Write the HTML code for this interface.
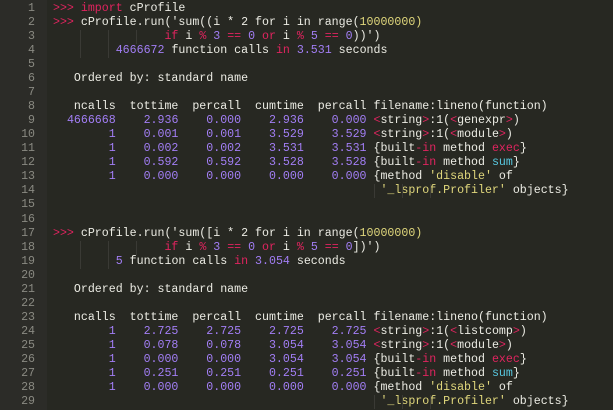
<!DOCTYPE html>
<html><head><meta charset="utf-8"><style>
html,body{margin:0;padding:0;width:613px;height:410px;overflow:hidden;background:#272822;}
#g{position:absolute;left:0;top:0;width:47px;height:410px;background:#2c2c28;}
.l{position:absolute;left:0;height:14px;width:613px;font-family:"Liberation Mono",monospace;font-size:11.62px;line-height:14px;white-space:pre;color:#ecece4;}
.n{position:absolute;left:0;width:35px;text-align:right;color:#8a8a82;}
.c{position:absolute;left:53px;}
.k{color:#e0245f}.p{color:#a27ef5}.s{color:#e0d77c}.b{color:#58c8e0}
.ig{position:absolute;width:1px;background:#3a3a35;height:14px;}
</style></head><body><div id="g"></div>
<div id="x"></div>
<script>
var L=[
'<span class="k">&gt;&gt;&gt; import</span> cProfile',
'<span class="k">&gt;&gt;&gt;</span> cProfile.run(\'sum((i * 2 for i in range(<span class="s">10000000)</span>',
'                <span class="k">if</span> i <span class="k">%</span> <span class="p">3</span> <span class="k">==</span> <span class="p">0</span> <span class="k">or</span> i <span class="k">%</span> <span class="p">5</span> <span class="k">==</span> <span class="p">0</span>))\')',
'         <span class="p">4666672</span> function calls <span class="k">in</span> <span class="p">3.531</span> seconds',
'',
'   Ordered by: standard name',
'',
'   ncalls  tottime  percall  cumtime  percall filename:lineno(function)',
'  <span class="p">4666668    2.936    0.000    2.936    0.000</span> <span class="k">&lt;</span>string<span class="k">&gt;</span>:1(<span class="k">&lt;</span>genexpr<span class="k">&gt;</span>)',
'        <span class="p">1    0.001    0.001    3.529    3.529</span> <span class="k">&lt;</span>string<span class="k">&gt;</span>:1(<span class="k">&lt;</span>module<span class="k">&gt;</span>)',
'        <span class="p">1    0.002    0.002    3.531    3.531</span> {built<span class="k">-in</span> method <span class="k">exec</span>}',
'        <span class="p">1    0.592    0.592    3.528    3.528</span> {built<span class="k">-in</span> method <span class="b">sum</span>}',
'        <span class="p">1    0.000    0.000    0.000    0.000</span> {method <span class="s">\'disable\'</span> of',
'                                               <span class="s">\'_lsprof.Profiler\'</span> objects}',
'','',
'<span class="k">&gt;&gt;&gt;</span> cProfile.run(\'sum([i * 2 for i in range(<span class="s">10000000)</span>',
'                <span class="k">if</span> i <span class="k">%</span> <span class="p">3</span> <span class="k">==</span> <span class="p">0</span> <span class="k">or</span> i <span class="k">%</span> <span class="p">5</span> <span class="k">==</span> <span class="p">0</span>])\')',
'         <span class="p">5</span> function calls <span class="k">in</span> <span class="p">3.054</span> seconds',
'',
'   Ordered by: standard name',
'',
'   ncalls  tottime  percall  cumtime  percall filename:lineno(function)',
'        <span class="p">1    2.725    2.725    2.725    2.725</span> <span class="k">&lt;</span>string<span class="k">&gt;</span>:1(<span class="k">&lt;</span>listcomp<span class="k">&gt;</span>)',
'        <span class="p">1    0.078    0.078    3.054    3.054</span> <span class="k">&lt;</span>string<span class="k">&gt;</span>:1(<span class="k">&lt;</span>module<span class="k">&gt;</span>)',
'        <span class="p">1    0.000    0.000    3.054    3.054</span> {built<span class="k">-in</span> method <span class="k">exec</span>}',
'        <span class="p">1    0.251    0.251    0.251    0.251</span> {built<span class="k">-in</span> method <span class="b">sum</span>}',
'        <span class="p">1    0.000    0.000    0.000    0.000</span> {method <span class="s">\'disable\'</span> of',
'                                               <span class="s">\'_lsprof.Profiler\'</span> objects}'
];
var h='';
for(var i=0;i<L.length;i++){
 var t=(1.5+i*14.07).toFixed(2);
 h+='<div class="l" style="top:'+t+'px"><span class="n">'+(i+1)+'</span><span class="c">'+L[i]+'</span></div>';
}
var guides={2:[80,108,136],3:[80,108],13:[374,402,430],17:[80,108,136],18:[80,108],28:[374,402,430]};
for(var k in guides){guides[k].forEach(function(x){h+='<div class="ig" style="left:'+x+'px;top:'+(1.5+k*14.07).toFixed(2)+'px"></div>';});}
document.getElementById('x').innerHTML=h;
</script>
</body></html>
